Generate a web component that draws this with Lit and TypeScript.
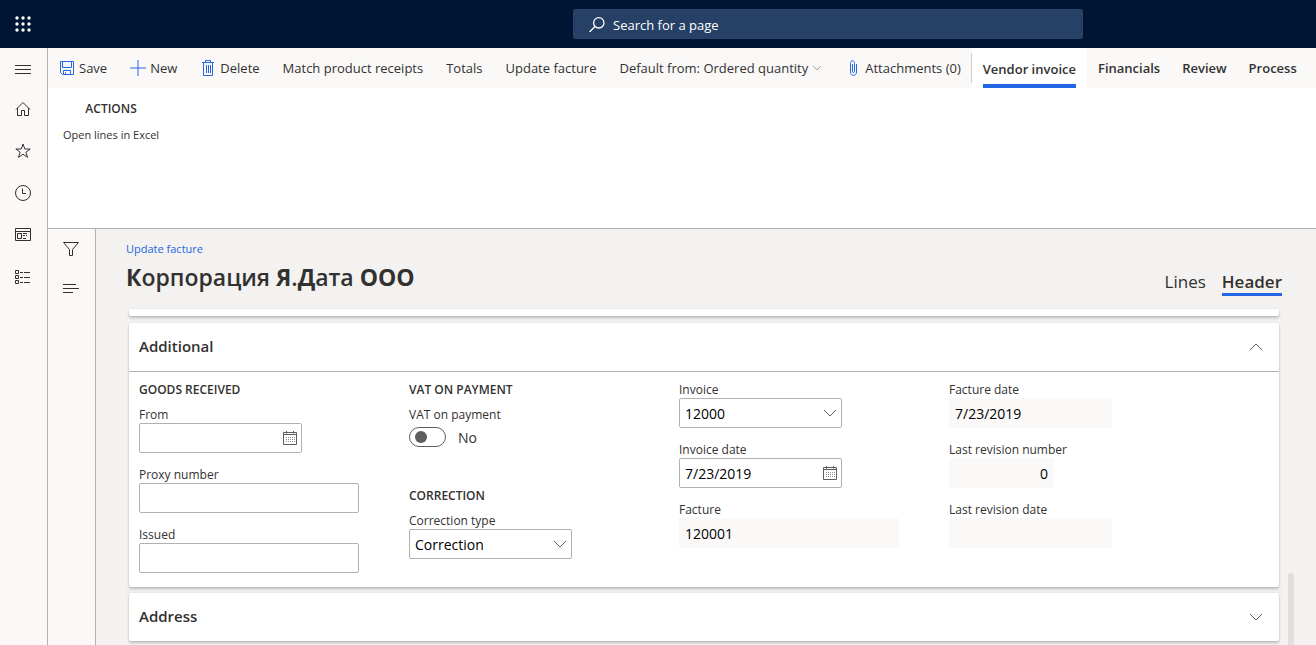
import { LitElement, html, css, svg, nothing } from "lit";
import { customElement, property, state } from "lit/decorators.js";
import { classMap } from "lit/directives/class-map.js";

const icons = {
  menu: svg`<path d="M0 5.5H16M0 9.5H16M0 13.5H16" />`,
  home: svg`<path d="M1 8.5L8 1.5L15 8.5M2.5 7V14.5H6.5V9.5H9.5V14.5H13.5V7" />`,
  star: svg`<path d="M8 1L9.8 6H15.2L10.9 9.2L12.5 14.4L8 11.2L3.5 14.4L5.1 9.2L0.8 6H6.2Z" />`,
  clock: svg`<circle cx="8" cy="8" r="7.5" /><path d="M7.5 3.5V8.5H11" />`,
  workspace: svg`<path d="M0.5 1.5H15.5V13.5H0.5ZM0.5 4.5H15.5M2.5 6.5H6.5V11.5H2.5ZM8 6.5H12M8 8.5H10M11 8.5H12M8 11.5H11" />`,
  modules: svg`<path d="M0.5 1.5H3.5V4.5H0.5ZM0.5 6.5H3.5V9.5H0.5ZM0.5 11.5H3.5V14.5H0.5ZM5 3.5H8M9 3.5H15M5 8.5H8M9 8.5H15M5 13.5H8M9 13.5H15" />`,
  filter: svg`<path d="M0.5 1.5H15.5L9.5 8.5V14.5H6.5V8.5Z" />`,
  lines: svg`<path d="M0 3.5H13M0 7.5H16M0 11.5H10" />`,
  search: svg`<circle cx="9.8" cy="6.8" r="5.2" stroke-width="1.3" /><path stroke-width="1.3" d="M6 10.5L0.5 16" />`,
  save: svg`<path d="M1.5 1.5H14.5V14.5H3.5L1.5 12.5ZM3.5 1.5V7.5H12.5V1.5M4.5 14.5V10.5H11.5V14.5M6.5 14.5V12.5" />`,
  plus: svg`<path d="M8 0V16M0 8H16" />`,
  trash: svg`<path d="M2 2.5H14M5.5 2.5V0.5H10.5V2.5M3.5 2.5V15.5H12.5V2.5M6.5 5V13M8.5 5V13M10.5 5V13" />`,
  clip: svg`<path d="M7.5 4V11.5C7.5 12.8 9.5 12.8 9.5 11.5V3.5C9.5 -0.2 5.5 -0.2 5.5 3.5V12C5.5 16.5 11.5 16.5 11.5 12V4" />`,
  down: svg`<path d="M2 5L8 11L14 5" />`,
  up: svg`<path d="M2 11L8 5L14 11" />`,
  calendar: svg`<path d="M1.5 2.5H14.5V14.5H1.5ZM1.5 4.5H14.5M4.5 1V3.5M11.5 1V3.5" /><path stroke-dasharray="1 1" opacity="0.7" d="M4 7.5H13M4 9.5H13M4 11.5H13" />`,
};

const icon = (name: keyof typeof icons, size = 16) => html`<svg
  width=${size} height=${size} viewBox="0 0 16 16" fill="none" stroke="currentColor"
  stroke-width="1" aria-hidden="true">${icons[name]}</svg>`;

const base = css`
  * { box-sizing: border-box; }
  button, input, select { font: inherit; color: inherit; margin: 0; }
  button { background: none; border: 0; padding: 0; cursor: pointer; }
  a { color: inherit; text-decoration: none; }
  svg { display: block; flex: none; }
  .label { display: block; padding-top: 2px; font-size: 12px; line-height: 16px; }
`;

@customElement("form-field")
class FormField extends LitElement {
  @property() label = "";
  @property() value = "";
  @property() kind: "text" | "date" | "select" = "text";
  @property() size: "small" | "medium" | "large" = "medium";
  @property({ type: Boolean }) locked = false;
  @property({ type: Boolean }) numeric = false;

  static styles = [base, css`
    :host { display: block; }
    .box {
      display: grid;
      align-items: center;
      max-width: 100%;
      height: 30px;
      border: 1px solid #b3b0ad;
      border-radius: 2px;
      background: #fff;
      color: #000;
      font-size: 14px;
    }
    .small { width: 105px; }
    .medium { width: 163px; }
    .large { width: 220px; }
    .locked { border-color: #faf9f8; background: #faf9f8; }
    .control {
      grid-area: 1 / 1;
      width: 100%;
      height: 28px;
      padding: 0 5px;
      border: 0;
      outline: 0;
      background: transparent;
      appearance: none;
      cursor: inherit;
    }
    select.control { padding-top: 2px; }
    .numeric { text-align: right; }
    .glyph { grid-area: 1 / 1; justify-self: end; margin-right: 3px; color: #605e5c; }
    .pass { pointer-events: none; }
  `];

  render() {
    const box = classMap({ box: true, [this.size]: true, locked: this.locked });
    return html`
      <label class="label" for="control">${this.label}</label>
      <div class=${box}>
        ${this.kind === "select"
          ? html`<select id="control" class="control"><option>${this.value}</option></select>
              <span class="glyph pass">${icon("down")}</span>`
          : html`<input id="control" type="text" .value=${this.value} ?readonly=${this.locked}
              class=${classMap({ control: true, numeric: this.numeric })} />`}
        ${this.kind === "date" && !this.locked
          ? html`<button class="glyph" aria-label=${"Pick a date: " + this.label}>${icon("calendar")}</button>`
          : nothing}
      </div>`;
  }
}

@customElement("app-root")
class AppRoot extends LitElement {
  @state() private vat = false;

  static styles = [base, css`
    :host {
      display: flex;
      flex-direction: column;
      height: 100vh;
      overflow: hidden;
      background: #f3f2f1;
      color: #323130;
      font-family: "Open Sans", "Noto Sans", sans-serif;
      font-size: 13px;
      line-height: 20px;
    }
    .top {
      display: grid;
      grid-template-columns: 340px 1fr;
      align-items: center;
      flex: none;
      height: 48px;
      background: #001433;
      color: #fff;
    }
    .waffle { width: 46px; height: 48px; display: grid; place-items: center; }
    .search {
      display: flex;
      align-items: center;
      gap: 8px;
      justify-self: center;
      width: min(510px, 90%);
      height: 30px;
      padding-left: 16px;
      border-radius: 2px;
      background: #274066;
    }
    .query { flex: 1; min-width: 0; height: 30px; padding: 2px 0 0; border: 0; outline: 0; background: none; }
    .query::placeholder { color: #fff; opacity: 1; }
    .frame { display: flex; flex: 1; min-height: 0; }
    .rail {
      display: flex;
      flex-direction: column;
      flex: none;
      width: 48px;
      border-right: 1px solid #b3b0ad;
      background: #faf9f8;
      color: #323130;
    }
    .rail button { display: grid; place-items: center; flex: none; height: 42px; padding-right: 2px; }
    .rail button.short { height: 40px; }
    .work { display: flex; flex-direction: column; flex: 1; min-width: 0; }
    .commands {
      display: flex;
      flex: none;
      height: 40px;
      padding-left: 11px;
      background: #faf9f8;
      white-space: nowrap;
    }
    .command { display: flex; align-items: center; gap: 4px; margin-right: 23px; }
    .command.last { margin-right: 10px; }
    .command svg { color: #2266e3; }
    .command .caret svg { color: #605e5c; }
    .tabs { display: flex; align-items: center; font-weight: 600; }
    .tabs::before { content: ""; width: 1px; height: 30px; background: #d2d0ce; }
    .tab { display: flex; align-items: center; height: 40px; padding: 0 11px; }
    .tab.active { background: #fff; }
    .tab.active span { height: 40px; padding-top: 11px; border-bottom: 4px solid #2266e3; }
    .ribbon {
      display: flex;
      flex: none;
      height: 141px;
      padding: 11px 15px;
      border-bottom: 1px solid #b3b0ad;
      background: #fff;
      font-size: 11px;
    }
    .group { display: flex; flex-direction: column; align-items: center; gap: 6px; }
    .caption { margin: 0; font-size: 12px; line-height: 20px; font-weight: 600; }
    .lower { display: flex; flex: 1; min-height: 0; }
    .page { display: flex; flex-direction: column; flex: 1; min-width: 0; padding-left: 30px; }
    .heading {
      display: flex;
      justify-content: space-between;
      flex: none;
      height: 80px;
      padding: 10px 34px 13px 0;
    }
    .crumb { display: block; font-size: 11px; line-height: 20px; color: #2266e3; }
    .title { margin: 0; font-size: 23px; line-height: 36px; font-weight: 600; }
    .title b { font-weight: 700; }
    .views { display: flex; align-self: flex-end; gap: 16px; font-size: 17px; line-height: 22px; }
    .view { border-bottom: 3px solid transparent; }
    .view.active { font-weight: 600; border-color: #2266e3; }
    .scroller { display: flex; gap: 9px; flex: 1; min-height: 0; padding: 0 22px 0 3px; }
    .cards { flex: 1; min-width: 0; }
    .thumb { align-self: flex-end; width: 6px; height: 72px; border-radius: 3px 3px 0 0; background: #e1dfdd; }
    .card {
      margin-bottom: 6px;
      border-radius: 2px;
      background: #fff;
      box-shadow: 0 2px 3px rgba(0, 0, 0, 0.22), 0 0 2px rgba(0, 0, 0, 0.1);
    }
    .card.tail { height: 7px; margin-bottom: 7px; border-radius: 0 0 2px 2px; }
    .fold {
      display: flex;
      justify-content: space-between;
      align-items: center;
      width: 100%;
      height: 48px;
      padding: 0 15px 0 10px;
      font-size: 15px;
      font-weight: 600;
    }
    .fold span { padding-bottom: 2px; }
    .fold svg { color: #605e5c; }
    .body {
      display: grid;
      grid-template-columns: repeat(auto-fill, 270px);
      padding: 8px 10px 14px;
      border-top: 1px solid #b3b0ad;
    }
    .column { display: flex; flex-direction: column; gap: 12px; }
    .section { margin: 0 0 -5px; padding-top: 2px; font-size: 12px; line-height: 16px; font-weight: 600; }
    .switch { display: flex; align-items: center; gap: 12px; height: 28px; margin-bottom: 23px; font-size: 14px; }
    .switch span { padding-top: 2px; }
    .toggle {
      display: flex;
      align-items: center;
      width: 37px;
      height: 20px;
      padding: 0 5px;
      border: 1px solid #605e5c;
      border-radius: 10px;
      background: #fff;
      appearance: none;
    }
    .toggle::before { content: ""; width: 12px; height: 12px; border-radius: 6px; background: #605e5c; }
    .toggle:checked { justify-content: flex-end; }
  `];

  render() {
    return html`
      <header class="top">
        <button class="waffle" aria-label="Apps">
          <svg width="16" height="16" viewBox="0 0 16 16" fill="currentColor" aria-hidden="true">
            ${[2, 8, 14].map((y) => [2, 8, 14].map((x) => svg`<circle cx=${x} cy=${y} r="1.7" />`))}
          </svg>
        </button>
        <div class="search">
          ${icon("search")}
          <input class="query" type="text" placeholder="Search for a page" aria-label="Search for a page" />
        </div>
      </header>
      <div class="frame">
        <nav class="rail">
          <button class="short" aria-label="Menu">${icon("menu")}</button>
          <button aria-label="Home">${icon("home")}</button>
          <button aria-label="Favorites">${icon("star")}</button>
          <button aria-label="Recent">${icon("clock")}</button>
          <button aria-label="Workspaces">${icon("workspace")}</button>
          <button aria-label="Modules">${icon("modules")}</button>
        </nav>
        <div class="work">
          <div class="commands">
            <button class="command">${icon("save")}Save</button>
            <button class="command">${icon("plus")}New</button>
            <button class="command">${icon("trash")}Delete</button>
            <button class="command">Match product receipts</button>
            <button class="command">Totals</button>
            <button class="command">Update facture</button>
            <button class="command">Default from: Ordered quantity
              <span class="caret">${icon("down", 10)}</span></button>
            <button class="command last">${icon("clip")}Attachments (0)</button>
            <nav class="tabs">
              <a class="tab active" href="#"><span>Vendor invoice</span></a>
              <a class="tab" href="#">Financials</a>
              <a class="tab" href="#">Review</a>
              <a class="tab" href="#">Process</a>
            </nav>
          </div>
          <div class="ribbon">
            <div class="group">
              <h2 class="caption">ACTIONS</h2>
              <button>Open lines in Excel</button>
            </div>
          </div>
          <div class="lower">
            <div class="rail">
              <button class="short" aria-label="Filter">${icon("filter")}</button>
              <button class="short" aria-label="Related information">${icon("lines")}</button>
            </div>
            <main class="page">
              <div class="heading">
                <div>
                  <a class="crumb" href="#">Update facture</a>
                  <h1 class="title"><b>К</b>орпорация <b>Я</b>.<b>Д</b>ата <b>ООО</b></h1>
                </div>
                <nav class="views">
                  <a class="view" href="#">Lines</a>
                  <a class="view active" href="#">Header</a>
                </nav>
              </div>
              <div class="scroller">
                <div class="cards">
                  <div class="card tail"></div>
                  <section class="card">
                    <button class="fold" aria-expanded="true"><span>Additional</span>${icon("up")}</button>
                    <div class="body">
                      <div class="column">
                        <h3 class="section">GOODS RECEIVED</h3>
                        <form-field label="From" kind="date"></form-field>
                        <form-field label="Proxy number" size="large"></form-field>
                        <form-field label="Issued" size="large"></form-field>
                      </div>
                      <div class="column">
                        <h3 class="section">VAT ON PAYMENT</h3>
                        <div>
                          <label class="label" for="vat">VAT on payment</label>
                          <div class="switch">
                            <input id="vat" class="toggle" type="checkbox" role="switch" .checked=${this.vat}
                              @change=${() => (this.vat = !this.vat)} />
                            <span>${this.vat ? "Yes" : "No"}</span>
                          </div>
                        </div>
                        <h3 class="section">CORRECTION</h3>
                        <form-field label="Correction type" kind="select" value="Correction"></form-field>
                      </div>
                      <div class="column">
                        <form-field label="Invoice" kind="select" value="12000"></form-field>
                        <form-field label="Invoice date" kind="date" value="7/23/2019"></form-field>
                        <form-field label="Facture" size="large" value="120001" locked></form-field>
                      </div>
                      <div class="column">
                        <form-field label="Facture date" value="7/23/2019" locked></form-field>
                        <form-field label="Last revision number" size="small" value="0" locked numeric></form-field>
                        <form-field label="Last revision date" locked></form-field>
                      </div>
                    </div>
                  </section>
                  <section class="card">
                    <button class="fold" aria-expanded="false"><span>Address</span>${icon("down")}</button>
                  </section>
                </div>
                <div class="thumb"></div>
              </div>
            </main>
          </div>
        </div>
      </div>
    `;
  }
}
